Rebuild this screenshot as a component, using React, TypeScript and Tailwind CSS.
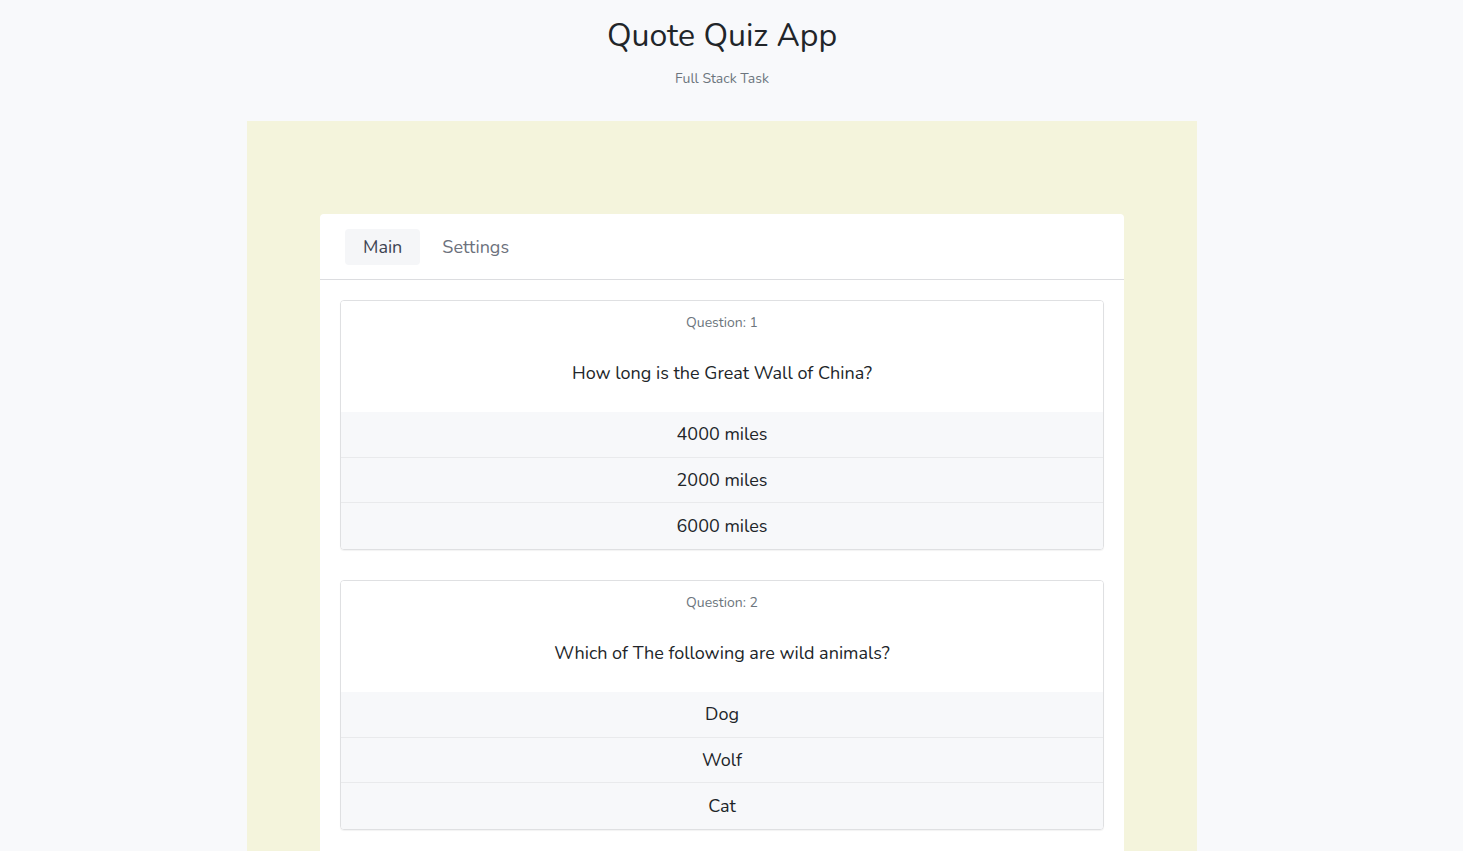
import { useState } from 'react';

const questions = [
    { id: 1, text: 'How long is the Great Wall of China?', options: ['4000 miles', '2000 miles', '6000 miles'] },
    { id: 2, text: 'Which of The following are wild animals?', options: ['Dog', 'Wolf', 'Cat'] },
];

export default function App() {
    const [tab, setTab] = useState('main');

    return (
        <div className="min-h-screen bg-[#f8f9fb] pr-[19px] text-[#212529]" style={{ fontFamily: 'Nunito, Lato, "Open Sans", sans-serif' }}>
            {/* Header */}
            <div className="pt-[16px] text-center">
                <h1 className="text-[32px] leading-[40px] font-normal">Quote Quiz App</h1>
                <p className="mt-[13px] text-[14px] leading-[20px] text-[#6c757d]">Full Stack Task</p>
            </div>

            {/* Beige container */}
            <div className="mx-auto mt-[32px] w-[950px] bg-[#f4f4dc] pt-[93px] pb-10">
                <div className="mx-auto w-[804px] rounded-[4px] bg-white">
                    {/* Tabs */}
                    <div className="flex gap-1 border-b border-[#dcdde0] px-[25px] pt-[15px] pb-[14px]">
                        <button
                            onClick={() => setTab('main')}
                            className={`h-[36px] rounded-[4px] px-[18px] text-[18px] ${tab === 'main' ? 'bg-[#f5f6f8] text-[#3d4451]' : 'text-[#6c717c]'}`}
                        >
                            Main
                        </button>
                        <button
                            onClick={() => setTab('settings')}
                            className={`h-[36px] rounded-[4px] px-[18px] text-[18px] ${tab === 'settings' ? 'bg-[#f5f6f8] text-[#3d4451]' : 'text-[#6c717c]'}`}
                        >
                            Settings
                        </button>
                    </div>

                    {/* Questions */}
                    <div className="flex flex-col gap-[30px] px-[20px] pt-[20px] pb-[30px]">
                        {questions.map((q) => (
                            <div key={q.id} className="overflow-hidden rounded-[4px] border border-[#dfe0e2] shadow-[0_1px_1px_rgba(0,0,0,0.05)]">
                                <div className="bg-white pt-[12px] pb-[26px] text-center">
                                    <div className="text-[14px] leading-[20px] text-[#6c757d]">Question: {q.id}</div>
                                    <div className="mt-[27px] text-[18px] leading-[26px]">{q.text}</div>
                                </div>
                                {q.options.map((opt, i) => (
                                    <div
                                        key={opt}
                                        className={`bg-[#f7f8fa] text-center text-[18px] ${i > 0 ? 'border-t border-[#e9eaec]' : ''} ${i === q.options.length - 1 ? 'h-[47px] leading-[47px]' : 'h-[45px] leading-[45px]'}`}
                                    >
                                        {opt}
                                    </div>
                                ))}
                            </div>
                        ))}
                    </div>
                </div>
            </div>
        </div>
    );
}
